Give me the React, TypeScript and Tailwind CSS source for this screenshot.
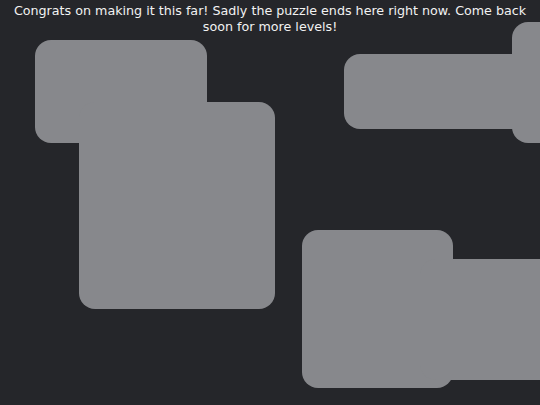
const pieces = [
  { id: "a", cls: "left-[35px] top-[40px] w-[172px] h-[103px]" },
  { id: "b", cls: "left-[79px] top-[102px] w-[196px] h-[207px]" },
  { id: "c", cls: "left-[344px] top-[54px] w-[190px] h-[75px]" },
  { id: "d", cls: "left-[512px] top-[22px] w-[60px] h-[121px]" },
  { id: "e", cls: "left-[302px] top-[230px] w-[151px] h-[158px]" },
  { id: "f", cls: "left-[420px] top-[259px] w-[160px] h-[121px]" },
];

export default function App() {
  return (
    <main className="relative w-[540px] h-[405px] overflow-hidden bg-[#25262a] font-['DejaVu_Sans',sans-serif]">
      <p className="relative z-10 px-2 pt-[3px] text-center text-[12.7px] leading-[16px] text-[#f2f2f2]">
        Congrats on making it this far! Sadly the puzzle ends here right now. Come back soon for more levels!
      </p>
      {pieces.map((p) => (
        <div
          key={p.id}
          className={`absolute rounded-2xl bg-[#87888c] ${p.cls}`}
        />
      ))}
    </main>
  );
}
